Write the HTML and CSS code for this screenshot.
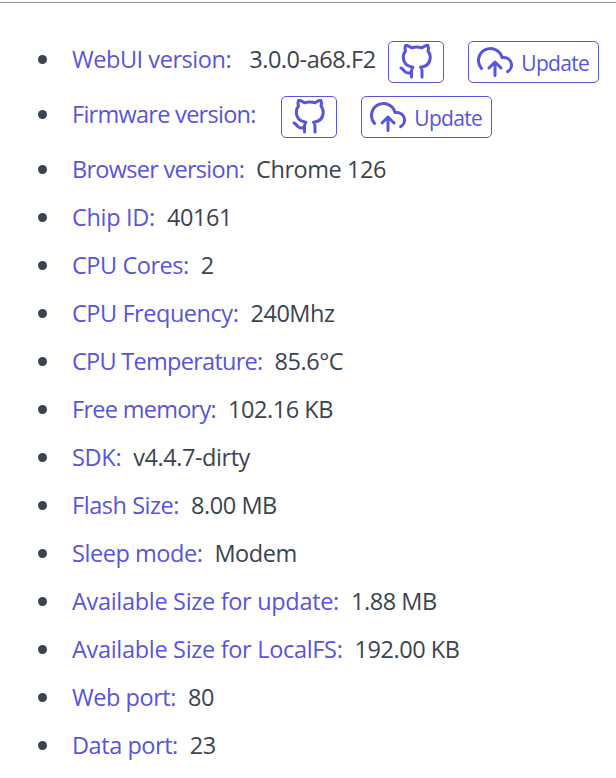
FILE: index.html
```html
<!DOCTYPE html>
<html lang="en">
<head>
<meta charset="UTF-8">
<meta name="viewport" content="width=device-width, initial-scale=1.0">
<title>About</title>
<link rel="stylesheet" href="styles.css">
</head>
<body>
    <!-- Shared icons -->
    <svg class="sprite">
        <symbol id="github" viewBox="0 0 24 24">
            <path d="M9 19c-5 1.5-5-2.5-7-3m14 6v-3.87a3.37 3.37 0 0 0-.94-2.61c3.14-.35 6.44-1.54 6.44-7A5.44 5.44 0 0 0 20 4.77 5.07 5.07 0 0 0 19.91 1S18.73.65 16 2.48a13.38 13.38 0 0 0-7 0C6.27.65 5.09 1 5.09 1A5.07 5.07 0 0 0 5 4.77a5.44 5.44 0 0 0-1.5 3.78c0 5.42 3.3 6.61 6.44 7A3.37 3.37 0 0 0 9 18.13V22"/>
        </symbol>
        <symbol id="upload-cloud" viewBox="0 0 24 24">
            <path d="M16 16l-4-4-4 4M12 12v9"/>
            <path d="M20.39 18.39A5 5 0 0 0 18 9h-1.26A8 8 0 1 0 3 16.3"/>
        </symbol>
    </svg>

    <ul class="about-list">
        <li class="row row-buttons">
            <span class="label">WebUI version:</span>
            <span class="value value-webui">3.0.0-a68.F2</span>
            <button class="btn btn-github"><svg class="icon"><use href="#github"/></svg></button>
            <button class="btn btn-update"><svg class="icon"><use href="#upload-cloud"/></svg><span>Update</span></button>
        </li>
        <li class="row row-buttons">
            <span class="label label-tight label-firmware">Firmware version:</span>
            <button class="btn btn-github"><svg class="icon"><use href="#github"/></svg></button>
            <button class="btn btn-update"><svg class="icon"><use href="#upload-cloud"/></svg><span>Update</span></button>
        </li>
        <li class="row"><span class="label label-tight">Browser version:</span><span class="value">Chrome 126</span></li>
        <li class="row"><span class="label label-wide">Chip ID:</span><span class="value">40161</span></li>
        <li class="row"><span class="label">CPU Cores:</span><span class="value">2</span></li>
        <li class="row"><span class="label">CPU Frequency:</span><span class="value">240Mhz</span></li>
        <li class="row"><span class="label label-tight">CPU Temperature:</span><span class="value">85.6°C</span></li>
        <li class="row"><span class="label label-tight">Free memory:</span><span class="value">102.16 KB</span></li>
        <li class="row"><span class="label label-wide">SDK:</span><span class="value">v4.4.7-dirty</span></li>
        <li class="row"><span class="label">Flash Size:</span><span class="value">8.00 MB</span></li>
        <li class="row"><span class="label">Sleep mode:</span><span class="value">Modem</span></li>
        <li class="row"><span class="label label-wide">Available Size for update:</span><span class="value">1.88 MB</span></li>
        <li class="row"><span class="label label-wide">Available Size for LocalFS:</span><span class="value">192.00 KB</span></li>
        <li class="row"><span class="label">Web port:</span><span class="value">80</span></li>
        <li class="row"><span class="label">Data port:</span><span class="value">23</span></li>
    </ul>
</body>
</html>
```
FILE: styles.css
```css
body {
    margin: 0;
    padding-top: 2px;
    background: #fff;
    color: #3b4351;
    font-family: "Segoe UI", "Open Sans", sans-serif;
    font-size: 23.5px;
    line-height: 37px;
    letter-spacing: -0.45px;
    overflow: hidden;
}

.sprite {
    display: none;
}

.about-list {
    list-style: none;
    margin: 0;
    padding: 38px 0 0 38px;
    border-top: 1px solid #999;
}

.row {
    display: flex;
    align-items: flex-start;
    height: 36px;
    margin-bottom: 12px;
    white-space: nowrap;
}

.row-buttons {
    height: 43px;
}

/* Bullet */
.row::before {
    content: "";
    flex: none;
    width: 9px;
    height: 9px;
    margin: 14px 25px 0 0;
    border-radius: 50%;
    background: #3b4351;
}

.label {
    color: #5755d9;
    margin-right: 12px;
}

.label-tight {
    letter-spacing: -0.72px;
}

.label-wide {
    letter-spacing: -0.31px;
}

.value-webui {
    margin: 0 12px 0 6px;
}

.label-firmware {
    margin-right: 25px;
}

.btn {
    display: flex;
    align-items: center;
    justify-content: center;
    box-sizing: border-box;
    flex: none;
    height: 42px;
    padding: 0;
    border: 1px solid #5755d9;
    border-radius: 5px;
    background: #fff;
    color: #5755d9;
    font: inherit;
    font-size: 21px;
    letter-spacing: -0.7px;
}

.btn span {
    padding-top: 2px;
}

.btn-github {
    width: 56px;
    margin-right: 24px;
}

.btn-update {
    width: 131px;
    gap: 8px;
}

.icon {
    width: 36px;
    height: 36px;
    fill: none;
    stroke: currentColor;
    stroke-width: 2;
    stroke-linecap: round;
    stroke-linejoin: round;
}
```
